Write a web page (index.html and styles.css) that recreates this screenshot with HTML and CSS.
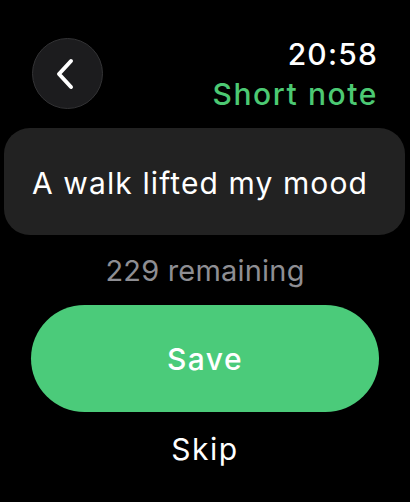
FILE: index.html
```html
<!DOCTYPE html>
<html lang="en">
<head>
<meta charset="utf-8">
<title>Short note</title>
<link rel="stylesheet" href="styles.css">
</head>
<body>
<div class="screen">
  <header class="header">
    <button class="back" aria-label="Back">
      <svg width="28" height="36" viewBox="0 0 28 36" aria-hidden="true">
        <path d="M19 5 L7 18 L19 31" fill="none" stroke="#fff" stroke-width="4" stroke-linecap="round" stroke-linejoin="round"/>
      </svg>
    </button>
    <div class="titles">
      <div class="time">20:58</div>
      <div class="title">Short note</div>
    </div>
  </header>
  <div class="field">A walk lifted my mood</div>
  <div class="remaining">229 remaining</div>
  <button class="save">Save</button>
  <button class="skip">Skip</button>
</div>
</body>
</html>
```

FILE: styles.css
```css
html, body {
  margin: 0;
  padding: 0;
  background: #000;
}
body {
  font-family: Inter, "Noto Sans", "Liberation Sans", sans-serif;
  color: #fff;
  width: 410px;
  height: 502px;
  overflow: hidden;
}
.screen {
  display: flex;
  flex-direction: column;
  align-items: center;
}
.header {
  align-self: stretch;
  display: flex;
  justify-content: space-between;
  align-items: flex-start;
  padding: 34px 32px 0 32px;
  height: 80px;
}
.back {
  width: 71px;
  height: 71px;
  margin-top: 4px;
  border-radius: 50%;
  background: #1c1c1e;
  border: 1.5px solid #333335;
  display: flex;
  align-items: center;
  justify-content: center;
  padding: 0 4px 0 0;
  box-sizing: border-box;
}
.titles {
  text-align: right;
  font-size: 30px;
  line-height: 40px;
}
.time {
  font-weight: 500;
  color: #fff;
  letter-spacing: 1.2px;
}
.title {
  font-weight: 500;
  color: #4cc973;
  letter-spacing: 1.6px;
}
.field {
  margin-top: 14px;
  align-self: stretch;
  margin-left: 4px;
  margin-right: 5px;
  height: 107px;
  box-sizing: border-box;
  background: #222222;
  border-radius: 26px;
  padding: 2px 0 0 28px;
  display: flex;
  align-items: center;
  font-size: 30px;
  line-height: 40px;
  letter-spacing: 1.1px;
  white-space: nowrap;
}
.remaining {
  margin-top: 16px;
  font-size: 29px;
  line-height: 40px;
  color: #8e8e93;
  letter-spacing: 0.2px;
}
.save {
  margin-top: 14px;
  width: 348px;
  height: 107px;
  border: none;
  border-radius: 54px;
  background: #4bcb7a;
  color: #fff;
  font-family: inherit;
  font-size: 30px;
  font-weight: 500;
  line-height: 40px;
  letter-spacing: 1.4px;
  padding: 0;
}
.skip {
  margin-top: 17px;
  background: none;
  border: none;
  color: #fff;
  font-family: inherit;
  font-size: 30px;
  line-height: 40px;
  letter-spacing: 1.5px;
  padding: 0;
}
```
